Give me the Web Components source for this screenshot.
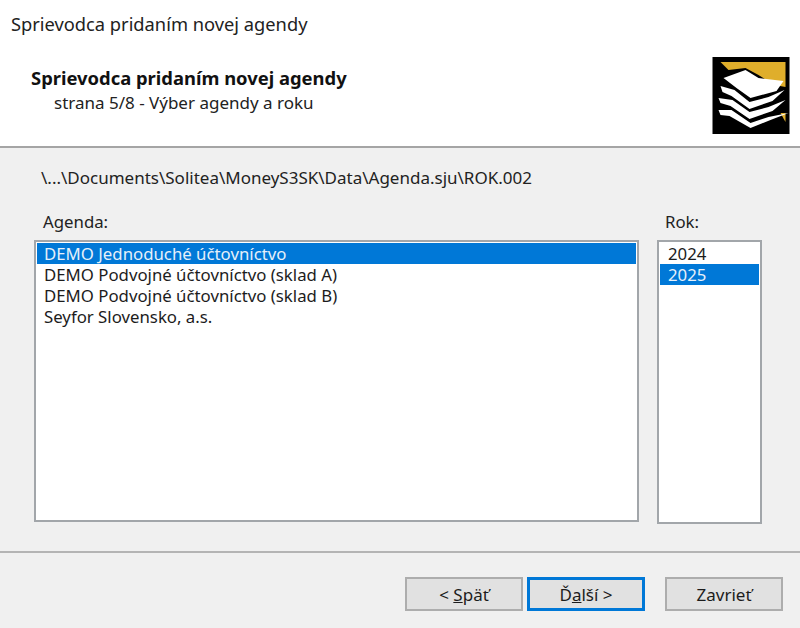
<!DOCTYPE html>
<html>
<head>
<meta charset="utf-8">
<title>Sprievodca</title>
<style>
html,body{margin:0;height:100%;}
body{font:17px "Noto Sans","DejaVu Sans",sans-serif;color:#1a1a1a;background:#f0f0f0;overflow:hidden;}
</style>
</head>
<body>
<wizard-dialog>
	<wizard-header slot="header" heading="Sprievodca pridaním novej agendy" sub="strana 5/8 - Výber agendy a roku"></wizard-header>
	<wizard-body slot="body" path="\...\Documents\Solitea\MoneyS3SK\Data\Agenda.sju\ROK.002">
		<pick-list slot="agenda" label="Agenda:" selected="0" style="width:605px;--h:282px;--ml:9px;--pl:7px">
			<div>DEMO Jednoduché účtovníctvo</div>
			<div>DEMO Podvojné účtovníctvo (sklad A)</div>
			<div>DEMO Podvojné účtovníctvo (sklad B)</div>
			<div>Seyfor Slovensko, a.s.</div>
		</pick-list>
		<pick-list slot="year" label="Rok:" selected="1" style="width:105px;--h:284px;--ml:8px;--pl:8px">
			<div>2024</div>
			<div>2025</div>
		</pick-list>
	</wizard-body>
	<wizard-footer slot="footer">
		<wizard-button><span>&lt; <u>S</u>päť</span></wizard-button>
		<wizard-button focused><span>Ď<u>a</u>lší &gt;</span></wizard-button>
		<wizard-button style="margin-left:16px"><span>Zavrieť</span></wizard-button>
	</wizard-footer>
</wizard-dialog>
<script>
class WizardDialog extends HTMLElement{
	constructor(){
		super();
		let shadow = this.attachShadow({mode: 'open'});
		shadow.innerHTML = `
		<style>
			:host{display:flex;flex-direction:column;width:800px;height:628px;}
			.title{height:50px;box-sizing:border-box;background:#fff;padding:13px 0 0 11px;font-size:18.3px;line-height:22px;color:#222;}
		</style>
		<div class="title">Sprievodca pridaním novej agendy</div>
		<slot name="header"></slot>
		<slot name="body"></slot>
		<slot name="footer"></slot>`;
	}
}
customElements.define('wizard-dialog', WizardDialog);

class WizardHeader extends HTMLElement{
	constructor(){
		super();
		let shadow = this.attachShadow({mode: 'open'});
		shadow.innerHTML = `
		<style>
			:host{display:flex;justify-content:space-between;height:96px;background:#fff;border-bottom:2px solid #a5a5a5;box-sizing:content-box;}
			.text{padding:16px 0 0 31px;}
			h1{margin:0 0 1px;font-size:18.4px;line-height:24px;font-weight:700;color:#111;}
			p{margin:0 0 0 23px;font-size:17px;line-height:24px;color:#222;}
			svg{display:block;margin:7px 10px 0 0;}
			.art{filter:blur(.5px);}
		</style>
		<div class="text"><h1></h1><p></p></div>
		<svg width="78" height="77" viewBox="0 0 77 77">
			<rect width="77" height="77" fill="#000"/>
			<g class="art">
				<path d="M8 5H73V30L62 28 46 18 33 11 16 13Z" fill="#dfae2b"/>
				<path d="M68 56H73V65Z" fill="#dfae2b"/>
				<path d="M11 21 33 13 46 21 71 24 64 34 38 41 24 31Z" fill="#fff"/>
				<path d="M8 29 22 33 37 45 56 40 72 33 60 44 37 52 19 39 10 35Z" fill="#fff"/>
				<path d="M6 41 20 43 37 55 56 50 73 43 60 54 37 62 18 49 8 46Z" fill="#fff"/>
				<path d="M6 53 19 53 38 66 56 60 76 56 58 63 38 71 17 59 8 58Z" fill="#fff"/>
			</g>
		</svg>`;
		shadow.querySelector('h1').textContent = this.getAttribute('heading');
		shadow.querySelector('p').textContent = this.getAttribute('sub');
	}
}
customElements.define('wizard-header', WizardHeader);

class WizardBody extends HTMLElement{
	constructor(){
		super();
		let shadow = this.attachShadow({mode: 'open'});
		shadow.innerHTML = `
		<style>
			:host{display:block;height:405px;padding-left:34px;border-bottom:2px solid #b4b4b4;box-sizing:border-box;}
			.path{padding:19px 0 0 7px;height:42px;box-sizing:border-box;line-height:22px;font-size:17px;color:#222;}
			.lists{display:flex;gap:18px;margin-top:21px;align-items:flex-start;}
		</style>
		<div class="path"></div>
		<div class="lists">
			<slot name="agenda"></slot>
			<slot name="year"></slot>
		</div>`;
		shadow.querySelector('.path').textContent = this.getAttribute('path');
	}
}
customElements.define('wizard-body', WizardBody);

class PickList extends HTMLElement{
	constructor(){
		super();
		let shadow = this.attachShadow({mode: 'open'});
		shadow.innerHTML = `
		<style>
			:host{display:block;}
			label{display:block;height:22px;line-height:22px;margin:0 0 7px var(--ml);font-size:16.8px;color:#222;}
			.box{height:var(--h);box-sizing:border-box;background:#fff;border:2px solid #a2a6aa;padding:1px;}
			::slotted(div){height:21px;line-height:21px;padding-left:var(--pl);font-size:16.8px;color:#1c1c1c;white-space:nowrap;}
			::slotted(div.sel){background:#0078d7;color:#e6f0fa;}
		</style>
		<label></label>
		<div class="box"><slot></slot></div>`;
		shadow.querySelector('label').textContent = this.getAttribute('label');
		const idx = parseInt(this.getAttribute('selected'));
		this.querySelectorAll('div')[idx].classList.add('sel');
	}
}
customElements.define('pick-list', PickList);

class WizardFooter extends HTMLElement{
	constructor(){
		super();
		let shadow = this.attachShadow({mode: 'open'});
		shadow.innerHTML = `
		<style>
			:host{display:flex;gap:4px;padding:24px 0 0 405px;}
		</style>
		<slot></slot>`;
	}
}
customElements.define('wizard-footer', WizardFooter);

class WizardButton extends HTMLElement{
	constructor(){
		super();
		let shadow = this.attachShadow({mode: 'open'});
		shadow.innerHTML = `
		<style>
			:host{display:flex;align-items:center;justify-content:center;width:118px;height:34px;box-sizing:border-box;background:#e1e1e1;border:2px solid #adadad;font-size:17px;color:#1c1c1c;}
			:host([focused]){border:3px solid #0078d7;}
		</style>
		<slot></slot>`;
	}
}
customElements.define('wizard-button', WizardButton);
</script>
</body>
</html>
